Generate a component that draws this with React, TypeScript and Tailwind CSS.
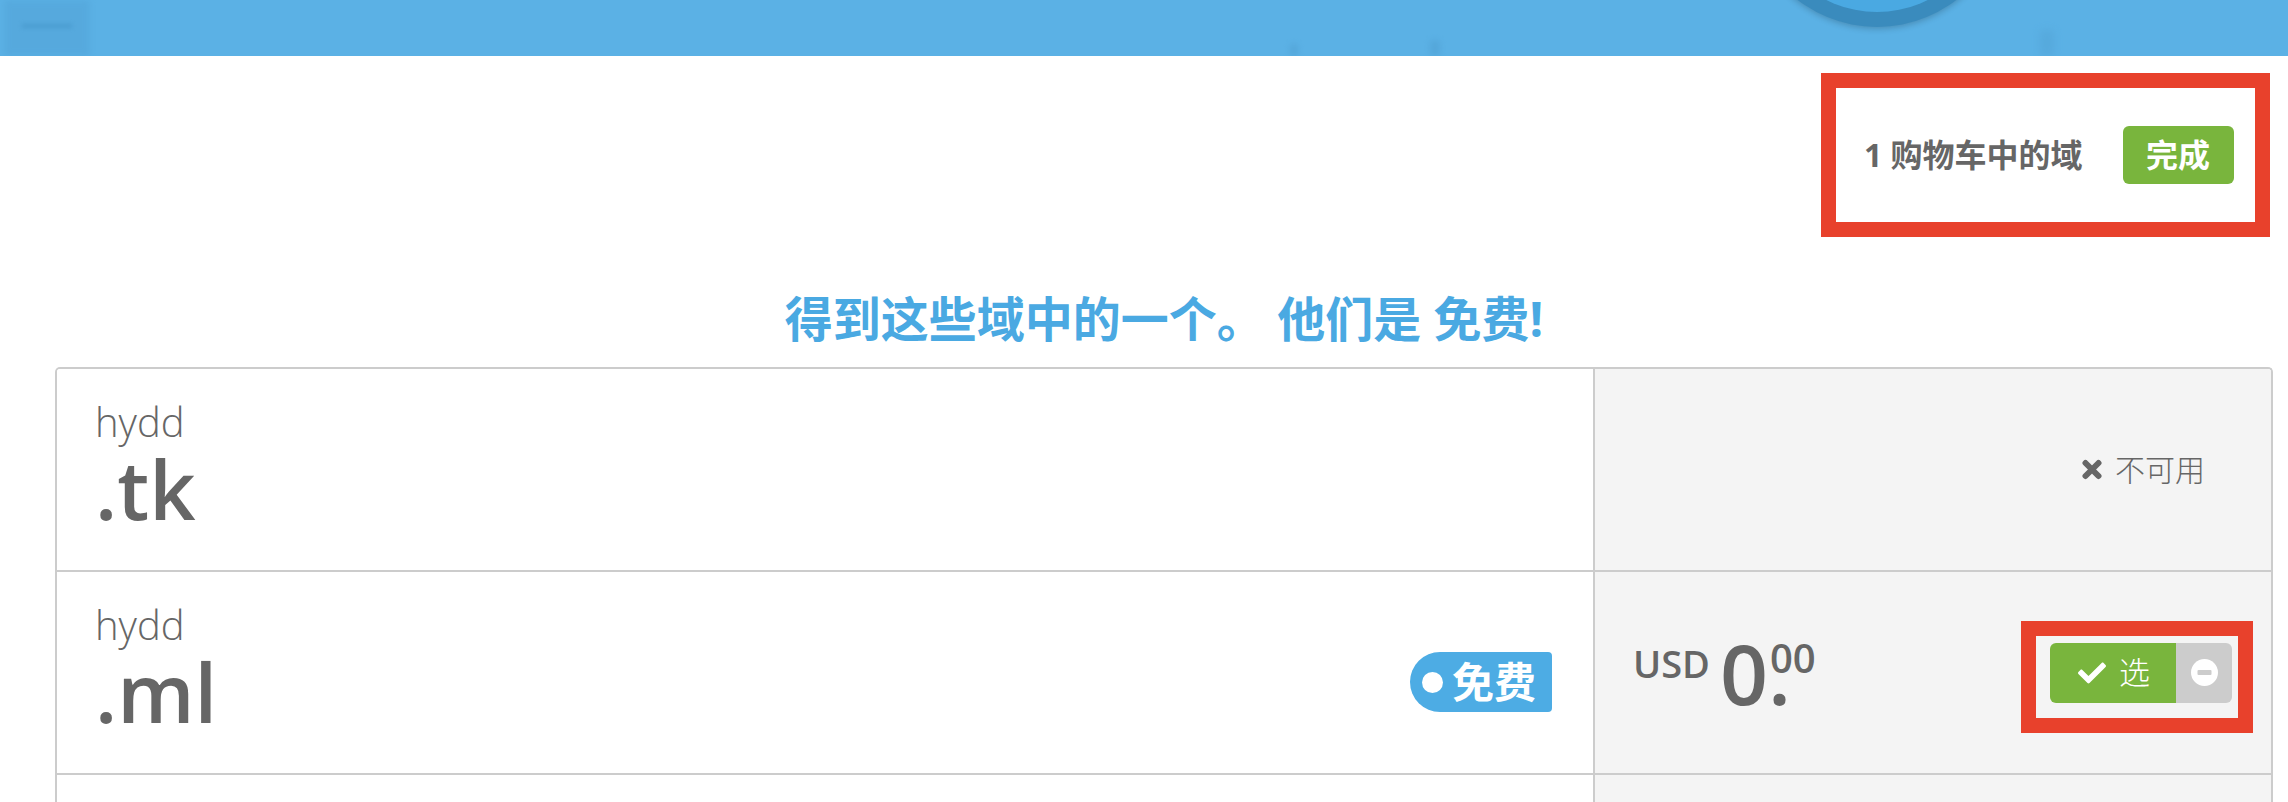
import { FaCheck } from "react-icons/fa"

const font = "font-['Open_Sans','Noto_Sans_CJK_SC',sans-serif]"

function TimesIcon() {
  return (
    <svg width="22" height="21" viewBox="0 0 22 21" className="shrink-0">
      <path d="M4.5 4L17.5 17M17.5 4L4.5 17" stroke="#666666" strokeWidth="6" strokeLinecap="round" />
    </svg>
  )
}

function MinusCircle() {
  return (
    <svg width="27" height="27" viewBox="0 0 27 27">
      <circle cx="13.5" cy="13.5" r="13.5" fill="#ffffff" />
      <rect x="6.5" y="11" width="14" height="5" rx="1" fill="#cccccc" />
    </svg>
  )
}

function DomainName({ tld }: { tld: string }) {
  return (
    <div className="pt-[33px] pl-[38px] text-[#666666]">
      <div className="text-[40px] font-light leading-none">hydd</div>
      <div className="mt-[6px] text-[81px] font-semibold leading-none">{tld}</div>
    </div>
  )
}

function Price() {
  return (
    <div className="flex items-start font-semibold text-[#666666]">
      <span className="mt-[13px] text-[38px] leading-none">USD</span>
      <span className="ml-[10px] text-[84px] leading-none">0</span>
      <span className="relative text-[84px] leading-none">
        .
        <span className="absolute left-[2px] top-[7px] text-[40px] leading-none">00</span>
      </span>
    </div>
  )
}

export default function App() {
  return (
    <div className={`h-[802px] w-[2288px] overflow-hidden bg-white ${font}`}>
      {/* header strip */}
      <header className="relative h-[56px] overflow-hidden bg-[#5bb1e5]">
        <div className="absolute left-[4px] top-0 h-[56px] w-[86px] bg-[#4f9fd3] opacity-40 blur-[3px]" />
        <div className="absolute left-[22px] top-[24px] h-[4px] w-[50px] bg-[#3f8fc4] opacity-50 blur-[2px]" />
        <div className="absolute left-[1290px] top-[44px] h-[12px] w-[8px] bg-[#4a97c9] opacity-40 blur-[3px]" />
        <div className="absolute left-[1430px] top-[40px] h-[16px] w-[10px] bg-[#4a97c9] opacity-40 blur-[3px]" />
        <div className="absolute left-[2040px] top-[30px] h-[26px] w-[14px] bg-[#4a97c9] opacity-30 blur-[4px]" />
        <div className="absolute left-[1747px] top-[-233px] h-[260px] w-[260px] rounded-full bg-[#3a8bbd] shadow-[0_2px_6px_rgba(0,0,0,0.2)]" />
        <div className="absolute left-[1764px] top-[-216px] h-[228px] w-[226px] rounded-full bg-[#4aa9e2]" />
      </header>

      <main className="pl-[55px] pr-[15px]">
        {/* cart summary */}
        <div className="flex justify-end pt-[17px] pr-[3px]">
          <div className="flex h-[164px] w-[449px] items-center border-[15px] border-[#e8412c] pl-[28px]">
            <span className="text-[32px] font-bold text-[#666666]">1 购物车中的域</span>
            <button className="ml-[40px] flex h-[58px] w-[111px] items-center justify-center rounded-[6px] bg-[#79b53d] text-[32px] font-bold text-white">
              完成
            </button>
          </div>
        </div>

        <h2 className="mt-[58px] mb-[24px] text-center text-[48px] font-bold leading-none text-[#4aa9e2]">
          得到这些域中的一个。 他们是 免费!
        </h2>

        {/* domain table */}
        <div className="overflow-hidden rounded-t-[5px] border-x-2 border-t-2 border-[#cccccc]">
          <div className="flex h-[203px] border-b-2 border-[#cccccc]">
            <div className="flex-1 bg-white">
              <DomainName tld=".tk" />
            </div>
            <div className="flex w-[678px] items-center justify-end border-l-2 border-[#cccccc] bg-[#f4f4f4] pr-[66px]">
              <div className="flex items-center gap-[12px] text-[30px] font-light text-[#666666]">
                <TimesIcon />
                <span>不可用</span>
              </div>
            </div>
          </div>

          <div className="flex h-[203px] border-b-2 border-[#cccccc]">
            <div className="flex flex-1 items-start justify-between bg-white pr-[41px]">
              <DomainName tld=".ml" />
              <div className="mt-[80px] flex h-[60px] w-[142px] items-center rounded-l-[30px] rounded-r-[4px] bg-[#4dace4] pl-[12px]">
                <span className="h-[21px] w-[21px] rounded-full bg-white" />
                <span className="ml-[9px] text-[42px] font-bold leading-none text-white">免费</span>
              </div>
            </div>
            <div className="flex w-[678px] items-center justify-between border-l-2 border-[#cccccc] bg-[#f4f4f4] pl-[38px] pr-[39px]">
              <Price />
              <div className="relative">
                <div className="flex h-[60px] w-[182px] overflow-hidden rounded-[6px]">
                  <div className="flex w-[126px] items-center bg-[#79b53d] pl-[28px] text-white">
                    <FaCheck className="h-[28px] w-[28px]" />
                    <span className="ml-[13px] text-[31px] font-light leading-none">选</span>
                  </div>
                  <div className="flex flex-1 items-center justify-center bg-[#cccccc]">
                    <MinusCircle />
                  </div>
                </div>
                <div className="absolute -left-[29px] -top-[22px] h-[112px] w-[232px] border-[15px] border-[#e8412c]" />
              </div>
            </div>
          </div>

          <div className="flex h-[200px]">
            <div className="flex-1 bg-white" />
            <div className="w-[678px] border-l-2 border-[#cccccc] bg-[#f4f4f4]" />
          </div>
        </div>
      </main>
    </div>
  )
}
